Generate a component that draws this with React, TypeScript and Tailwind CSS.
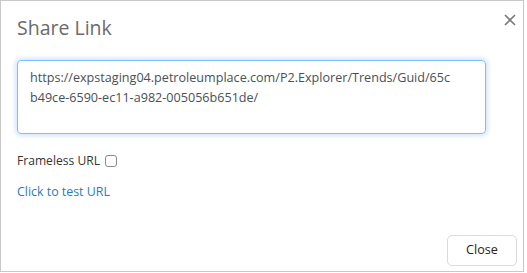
import React from "react";

export default function App(): React.ReactElement {
  const font = { fontFamily: '"Open Sans", "Noto Sans", sans-serif' };
  return (
    <div className="w-[527px] h-[273px] bg-white" style={font}>
      <div className="w-[524px] h-[272px] border border-[#c9c9c9] bg-white flex flex-col">
        {/* Header */}
        <div className="flex items-start justify-between pl-4 pr-[7px] pt-[13px]">
          <h2 className="text-[19.5px] leading-[28px] text-[#6b6b6b]">Share Link</h2>
          <button className="w-[12px] h-[12px] text-[#7a7a7a]">
            <svg width="12" height="12" viewBox="0 0 12 12" fill="none" stroke="currentColor" strokeWidth="1.6">
              <path d="M1 1 L11 11 M11 1 L1 11" />
            </svg>
          </button>
        </div>

        {/* Body */}
        <div className="px-4 pt-[18px] flex flex-col">
          <div className="w-[469px] h-[74px] rounded-[4px] border border-[#80bdff] shadow-[0_0_4px_2px_rgba(0,123,255,0.18)] px-3 pt-[7px] text-[12.6px] leading-[20px] text-[#495057]">
            https://expstaging04.petroleumplace.com/P2.Explorer/Trends/Guid/65c
            <br />
            b49ce-6590-ec11-a982-005056b651de/
          </div>

          <div className="mt-[17px] flex items-center gap-[5px] text-[12.1px] leading-[20px] text-[#333]">
            <span>Frameless URL</span>
            <span className="w-[12px] h-[12px] rounded-[3px] border border-[#8a8a8a] bg-white" />
          </div>

          <a className="mt-[11px] text-[12.4px] leading-[20px] text-[#2a7bbf] cursor-pointer w-fit">
            Click to test URL
          </a>
        </div>

        {/* Footer */}
        <div className="mt-auto flex justify-end pr-[6px] pb-[5px]">
          <button className="w-[70px] h-[31px] rounded-[5px] border border-[#dadada] bg-white text-[12.6px] text-[#222]">
            Close
          </button>
        </div>
      </div>
    </div>
  );
}
